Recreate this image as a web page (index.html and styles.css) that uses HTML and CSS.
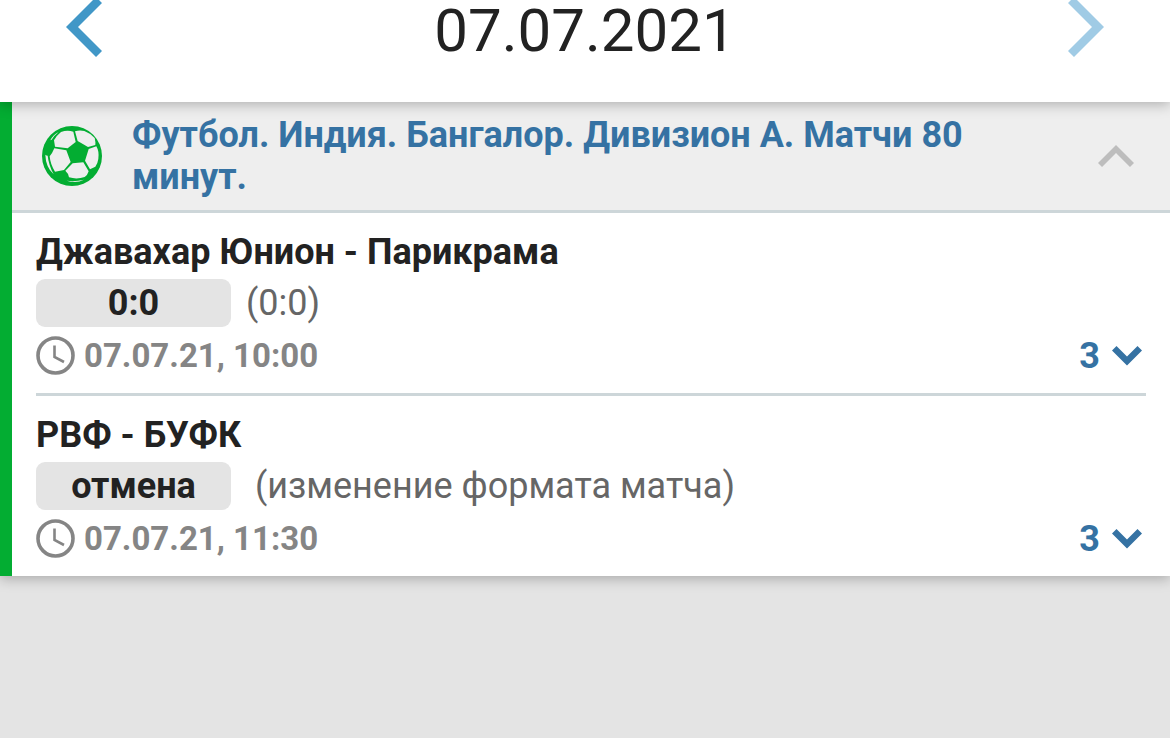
FILE: index.html
```html
<!DOCTYPE html>
<html lang="ru">
<head>
    <meta charset="UTF-8">
    <meta name="viewport" content="width=device-width, initial-scale=1.0">
    <title>Результаты</title>
    <link rel="stylesheet" href="styles.css">
</head>
<body>
    <header class="date-bar">
        <button class="date-button" type="button" aria-label="Предыдущий день">
            <svg width="36" height="57" viewBox="0 0 36 57"><path fill="#4197c7" d="M30 -3L36 3L12 27L36 51L30 57L0 27Z"/></svg>
        </button>
        <h1 class="date">07.07.2021</h1>
        <button class="date-button" type="button" aria-label="Следующий день">
            <svg width="36" height="57" viewBox="0 0 36 57"><path fill="#a0cbe5" d="M6 -3L0 3L24 27L0 51L6 57L36 27Z"/></svg>
        </button>
    </header>

    <main class="league">
        <div class="league-header">
            <svg class="ball" width="60" height="60" viewBox="0 0 180 180">
                <circle cx="90" cy="90" r="90" fill="#03ad32"/>
                <g fill="#eeeeee">
                    <path d="M39 62L36 43Q45 27 57 18Q76 11 94 17L101 48L77 67Z"/>
                    <path d="M99 16Q113 11 127 15Q146 22 158 36Q161 47 160 57L138 63L107 45Z"/>
                    <path d="M140 69L163 61Q172 76 169 99Q167 113 160 122L144 130L129 104Z"/>
                    <path d="M92 112L124 109L140 136Q137 147 128 153Q105 161 81 154Q81 144 70 134Z"/>
                    <path d="M37 67L73 73L86 108L66 132L39 137Q25 115 23 91Q30 84 37 67Z"/>
                    <path d="M10 86Q13 89 17 89Q20 117 35 145Q11 123 10 86Z"/>
                    <path d="M25 43Q34 25 50 18Q36 29 29 41Z"/>
                    <path d="M74 164Q99 168 126 161Q102 174 74 164Z"/>
                </g>
            </svg>
            <h2 class="league-name">Футбол. Индия. Бангалор. Дивизион А. Матчи 80 минут.</h2>
            <button class="collapse-button" type="button" aria-label="Свернуть">
                <svg width="36" height="22" viewBox="0 0 36 22"><path fill="#bdbdbd" d="M18 0L36 18L32 22L18 8L4 22L0 18Z"/></svg>
            </button>
        </div>

        <section class="match">
            <h3 class="match-name">Джавахар Юнион - Парикрама</h3>
            <div class="result">
                <span class="score">0:0</span>
                <span class="details">(0:0)</span>
            </div>
            <div class="match-footer">
                <svg class="clock" width="39" height="39" viewBox="0 0 39 39" fill="none" stroke="#858585">
                    <circle cx="19.5" cy="19.5" r="17.5" stroke-width="3.6"/>
                    <path stroke-width="2.6" d="M18.5 9.5V21L28 26"/>
                </svg>
                <time class="match-time" datetime="2021-07-07T10:00">07.07.21, 10:00</time>
                <button class="more-button" type="button">
                    3
                    <svg width="30" height="20" viewBox="0 0 30 20"><path fill="#3572a3" d="M4.500 0L15 10.500L25.500 0L30 4.500L15 19.500L0 4.500Z"/></svg>
                </button>
            </div>
        </section>

        <section class="match">
            <h3 class="match-name">РВФ - БУФК</h3>
            <div class="result">
                <span class="score">отмена</span>
                <span class="details">&nbsp;(изменение формата матча)</span>
            </div>
            <div class="match-footer">
                <svg class="clock" width="39" height="39" viewBox="0 0 39 39" fill="none" stroke="#858585">
                    <circle cx="19.5" cy="19.5" r="17.5" stroke-width="3.6"/>
                    <path stroke-width="2.6" d="M18.5 9.5V21L28 26"/>
                </svg>
                <time class="match-time" datetime="2021-07-07T11:30">07.07.21, 11:30</time>
                <button class="more-button" type="button">
                    3
                    <svg width="30" height="20" viewBox="0 0 30 20"><path fill="#3572a3" d="M4.500 0L15 10.500L25.500 0L30 4.500L15 19.500L0 4.500Z"/></svg>
                </button>
            </div>
        </section>
    </main>
</body>
</html>
```
FILE: styles.css
```css
* {
    box-sizing: border-box;
}

body {
    margin: 0;
    min-height: 100vh;
    background-color: #e4e4e4;
    color: #222222;
    font-family: Roboto, "Liberation Sans", sans-serif;
    font-size: 36px;
    line-height: 42px;
}

h1, h2, h3 {
    margin: 0;
}

button {
    padding: 0;
    border: none;
    background: none;
    font: inherit;
    cursor: pointer;
}

svg {
    display: block;
    flex: none;
}

.date-bar {
    position: relative;
    z-index: 1;
    display: flex;
    justify-content: space-between;
    align-items: flex-start;
    padding: 0 66px 40px;
    background-color: #ffffff;
    box-shadow: 0 3px 12px rgba(0, 0, 0, 0.25);
}

.date {
    font-size: 60px;
    font-weight: 400;
    line-height: 62px;
}

.league {
    position: relative;
    border-left: 12px solid #03ad32;
    background-color: #ffffff;
    box-shadow: 0 3px 12px rgba(0, 0, 0, 0.25);
}

.league-header {
    display: flex;
    align-items: center;
    gap: 30px;
    padding: 12px 36px 12px 30px;
    border-bottom: 3px solid #cdd6d9;
    background-color: #eeeeee;
}

.league-name {
    flex: 1;
    color: #3572a3;
    font-size: 36px;
    font-weight: 700;
}

.match {
    margin: 0 24px;
    padding: 18px 0;
}

.match + .match {
    border-top: 3px solid #cdd6d9;
}

.match-name {
    font-size: 36px;
    font-weight: 700;
}

.result {
    display: flex;
    gap: 15px;
    margin: 6px 0 9px;
    line-height: 48px;
}

.score {
    width: 195px;
    border-radius: 9px;
    background-color: #e4e4e4;
    font-weight: 700;
    text-align: center;
}

.details {
    color: #666666;
}

.match-footer {
    display: flex;
    align-items: center;
    gap: 9px;
    height: 39px;
}

.match-time {
    color: #858585;
    font-size: 33px;
    font-weight: 700;
}

.more-button {
    display: flex;
    align-items: center;
    gap: 12px;
    margin-left: auto;
    padding-right: 4px;
    color: #3572a3;
    font-weight: 700;
}
```
